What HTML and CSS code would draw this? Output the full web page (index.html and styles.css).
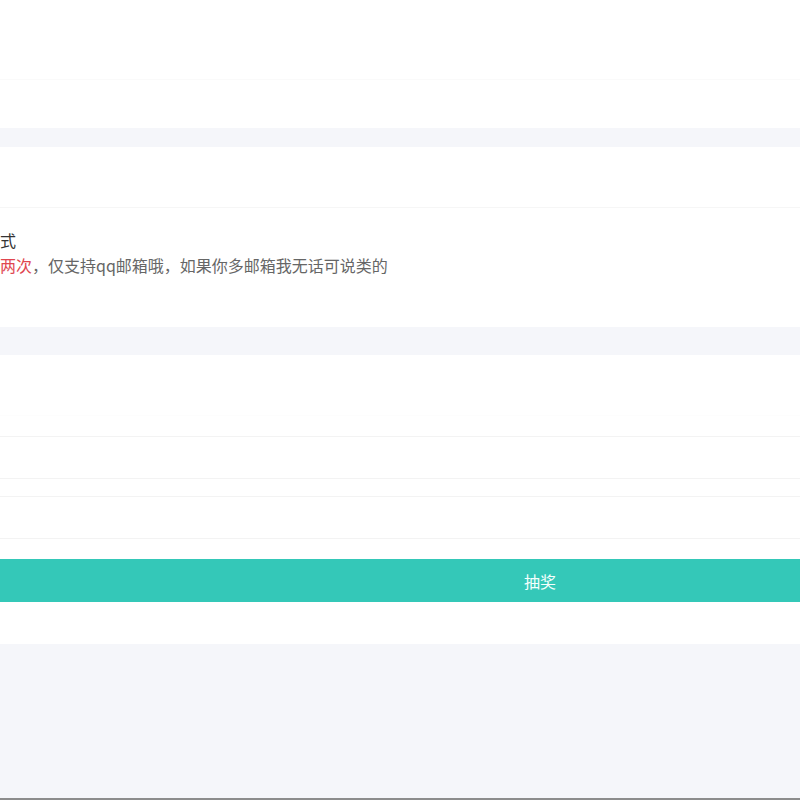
FILE: index.html
```html
<!DOCTYPE html>
<html lang="zh-CN">
<head>
    <meta charset="UTF-8">
    <meta name="viewport" content="width=device-width, initial-scale=1.0">
    <title>抽奖</title>
    <link rel="stylesheet" href="styles.css">
</head>
<body>
    <div class="page">
        <header class="top">
            <div class="top-nav"></div>
        </header>

        <!-- rules card -->
        <div class="card">
            <div class="card-head"></div>
            <div class="card-body">
                <p class="rule-title">式</p>
                <p class="rule-text"><span class="red">两次</span>，仅支持qq邮箱哦，如果你多邮箱我无话可说类的</p>
            </div>
        </div>

        <!-- form card -->
        <div class="card">
            <div class="card-head plain"></div>
            <div class="card-body form">
                <input class="field" type="text">
                <input class="field" type="text">
                <button class="draw-button">抽奖</button>
            </div>
        </div>
    </div>
</body>
</html>
```

FILE: styles.css
```css
html, body {
    overflow: hidden;
}

body {
    margin: 0;
    padding: 0;
    background-color: #f5f6fa;
    font-family: "Noto Sans CJK SC", "Noto Sans", sans-serif;
    height: 800px;
}

.page {
    width: 1080px;
    height: 798px;
    border-bottom: 2px solid #8c8c8c;
    background-color: #f5f6fa;
}

.top {
    background-color: #fff;
    height: 128px;
    margin-bottom: 19px;
}

.top-nav {
    height: 79px;
    border-bottom: 1px solid #fafafa;
}

.card {
    background-color: #fff;
    margin-bottom: 28px;
}

.card-head {
    height: 60px;
    border-bottom: 1px solid #f6f6f6;
}

.card-head.plain {
    border-bottom-color: #fdfdfd;
}

.card-body {
    padding: 20px 0 49px;
}

.card-body p {
    margin: 0;
    font-size: 16px;
    line-height: 25px;
}

.rule-title {
    color: #333;
}

.rule-text {
    color: #666;
}

.red {
    color: #e0464f;
}

.card-body.form {
    padding: 20px 0 42px;
    display: flex;
    flex-direction: column;
}

.field {
    height: 43px;
    box-sizing: border-box;
    border: 1px solid #f3f3f3;
    border-left: none;
    margin: 0 0 17px;
    padding: 0 10px;
    outline: none;
}

.field + .field {
    margin-bottom: 20px;
}

.draw-button {
    height: 43px;
    border: none;
    background-color: #34c8b8;
    color: #f4fffd;
    font-family: "Noto Sans CJK SC", sans-serif;
    font-size: 16px;
    cursor: pointer;
}
```
